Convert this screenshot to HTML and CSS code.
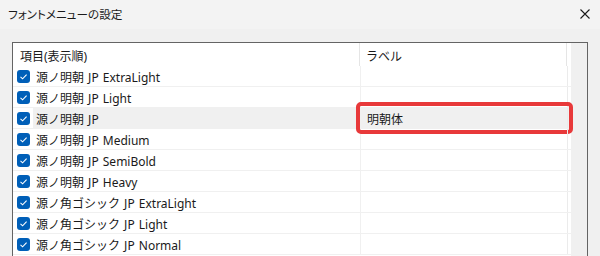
FILE: index.html
```html
<!DOCTYPE html>
<html lang="ja">
<head>
    <meta charset="UTF-8">
    <title>フォントメニューの設定</title>
    <link rel="stylesheet" href="styles.css">
</head>
<body>
    <div class="titlebar">
        <span class="title">フォントメニューの設定</span>
        <svg class="close" width="10" height="10" viewBox="0 0 10 10">
            <path d="M0.5 0.5 L9.5 9.5 M9.5 0.5 L0.5 9.5" stroke="#1a1a1a" stroke-width="1.1" fill="none"/>
        </svg>
    </div>

    <div class="content">
        <div class="list">
            <div class="grid">
                <div class="header">
                    <div class="col-name">項目(表示順)</div>
                    <div class="col-label">ラベル</div>
                    <div class="col-rest"></div>
                </div>

                <div class="row">
                    <div class="check-cell"><span class="checkbox"></span></div>
                    <div class="col-name">源ノ明朝 JP ExtraLight</div>
                    <div class="col-label"></div>
                    <div class="col-rest"></div>
                </div>
                <div class="row">
                    <div class="check-cell"><span class="checkbox"></span></div>
                    <div class="col-name">源ノ明朝 JP Light</div>
                    <div class="col-label"></div>
                    <div class="col-rest"></div>
                </div>
                <div class="row selected">
                    <div class="check-cell"><span class="checkbox"></span></div>
                    <div class="col-name">源ノ明朝 JP</div>
                    <div class="col-label">明朝体<span class="highlight"></span></div>
                    <div class="col-rest"></div>
                </div>
                <div class="row">
                    <div class="check-cell"><span class="checkbox"></span></div>
                    <div class="col-name">源ノ明朝 JP Medium</div>
                    <div class="col-label"></div>
                    <div class="col-rest"></div>
                </div>
                <div class="row">
                    <div class="check-cell"><span class="checkbox"></span></div>
                    <div class="col-name">源ノ明朝 JP SemiBold</div>
                    <div class="col-label"></div>
                    <div class="col-rest"></div>
                </div>
                <div class="row">
                    <div class="check-cell"><span class="checkbox"></span></div>
                    <div class="col-name">源ノ明朝 JP Heavy</div>
                    <div class="col-label"></div>
                    <div class="col-rest"></div>
                </div>
                <div class="row">
                    <div class="check-cell"><span class="checkbox"></span></div>
                    <div class="col-name">源ノ角ゴシック JP ExtraLight</div>
                    <div class="col-label"></div>
                    <div class="col-rest"></div>
                </div>
                <div class="row">
                    <div class="check-cell"><span class="checkbox"></span></div>
                    <div class="col-name">源ノ角ゴシック JP Light</div>
                    <div class="col-label"></div>
                    <div class="col-rest"></div>
                </div>
                <div class="row">
                    <div class="check-cell"><span class="checkbox"></span></div>
                    <div class="col-name">源ノ角ゴシック JP Normal</div>
                    <div class="col-label"></div>
                    <div class="col-rest"></div>
                </div>
            </div>
            <div class="scrollbar"></div>
        </div>
    </div>
</body>
</html>
```

FILE: styles.css
```css
/* General styles */
body {
    margin: 0;
    width: 600px;
    height: 256px;
    overflow: hidden;
    background: #f0f0f0;
    font-family: 'Noto Sans', 'Noto Sans CJK JP', sans-serif;
    font-size: 12px;
    color: #1a1a1a;
}

/* Title bar */
.titlebar {
    height: 29px;
    background: #f3f3f3;
    display: flex;
    align-items: center;
    justify-content: space-between;
    padding: 0 10px 0 8px;
    box-sizing: border-box;
}

.title {
    font-size: 11.6px;
    font-feature-settings: "palt";
    margin-top: -1px;
}

.close {
    margin-top: -1px;
}

/* List view */
.content {
    padding: 13px 12px 0 12px;
}

.list {
    display: flex;
    width: 576px;
    height: 220px;
    box-sizing: border-box;
    border: 1px solid #646464;
    border-bottom: none;
    background: #fff;
}

.grid {
    width: 558px;
    background: #fff;
}

.scrollbar {
    flex: 1;
    background: #f0f0f0;
}

.header,
.row {
    display: flex;
}

.header {
    height: 23px;
}

.header .col-name {
    width: 339px;
    padding: 2px 0 0 7px;
    border-right: 1px solid #e5e5e5;
    display: flex;
    align-items: center;
}

.header .col-label {
    width: 200px;
    padding: 2px 0 0 6px;
    border-right: 1px solid #e5e5e5;
    display: flex;
    align-items: center;
}

.row {
    height: 20px;
    border-bottom: 1px solid #f0f0f0;
    word-spacing: 1px;
}

.check-cell {
    width: 20px;
    display: flex;
    align-items: center;
    padding-left: 4px;
    box-sizing: border-box;
}

.checkbox {
    width: 13px;
    height: 13px;
    border-radius: 3px;
    background: #005fb8 url("data:image/svg+xml;utf8,<svg xmlns='http://www.w3.org/2000/svg' width='13' height='13'><path d='M3.5 6.8 L5.6 8.8 L9.6 4.6' stroke='white' stroke-width='1.1' fill='none'/></svg>") no-repeat center;
}

.row .col-name {
    width: 324px;
    padding: 2px 0 0 3px;
    border-right: 1px solid #f0f0f0;
    display: flex;
    align-items: center;
}

.row .col-label {
    width: 200px;
    padding: 2px 0 0 6px;
    border-right: 1px solid #ebebeb;
    display: flex;
    align-items: center;
    position: relative;
}

.col-rest {
    flex: 1;
}

.row.selected .col-name,
.row.selected .col-label,
.row.selected .col-rest {
    background: #f0f0f0;
}

/* Red annotation frame */
.highlight {
    position: absolute;
    left: -5px;
    top: -6px;
    width: 217px;
    height: 32px;
    box-sizing: border-box;
    border: 4px solid #e8393a;
    border-radius: 5px;
}
```
